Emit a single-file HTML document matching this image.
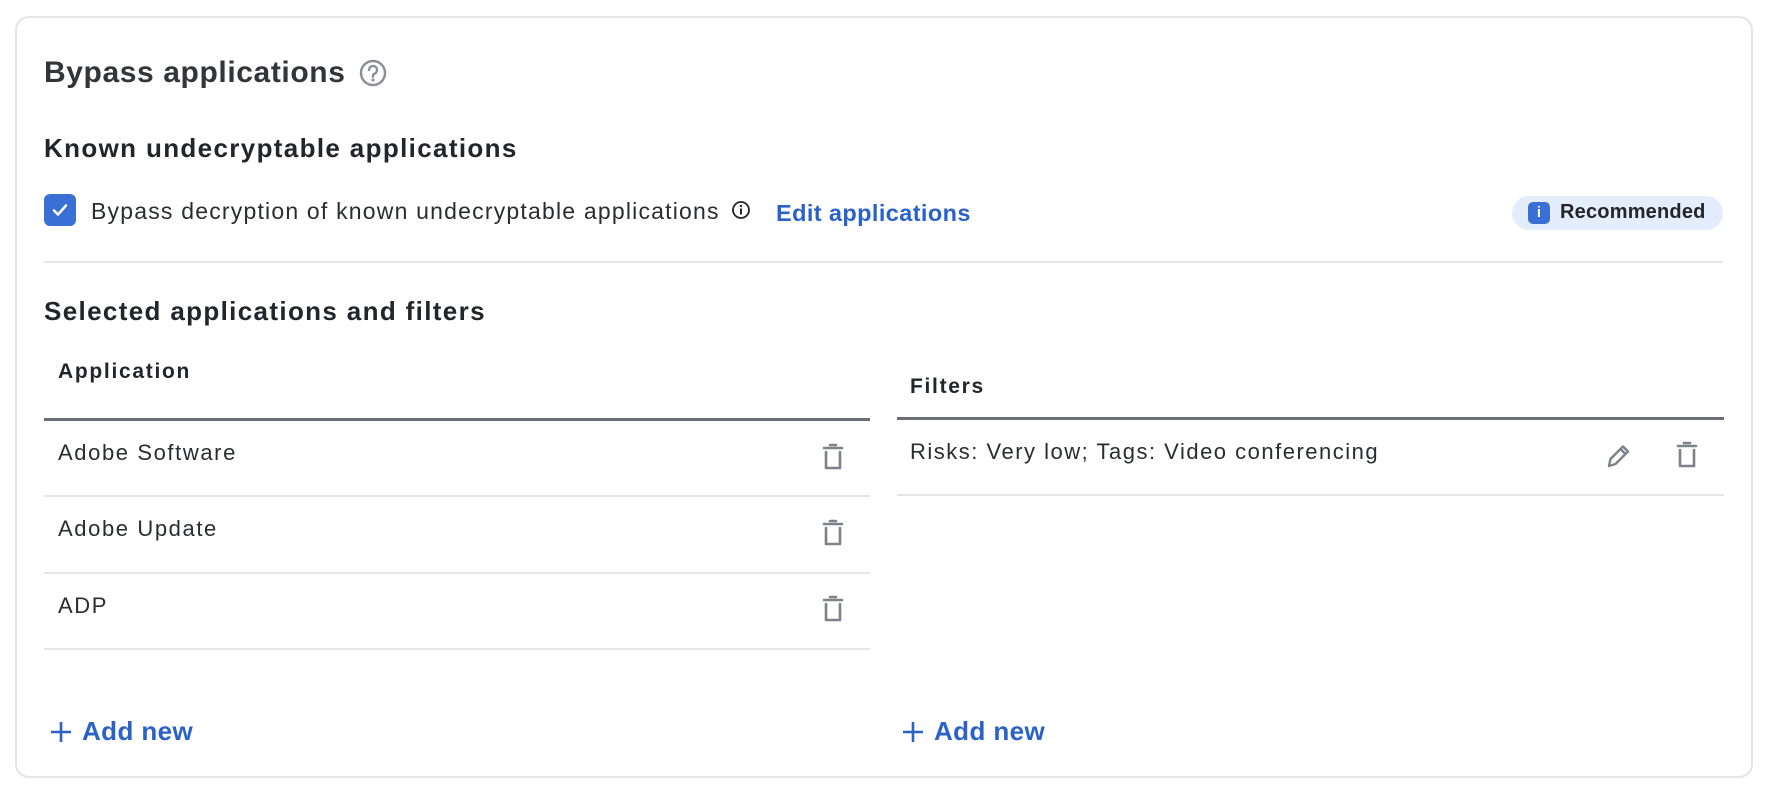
<!DOCTYPE html>
<html><head><meta charset="utf-8"><style>
*{box-sizing:border-box;margin:0;padding:0}
body{width:1766px;height:794px;background:#fff;font-family:"Liberation Sans",sans-serif;color:#23252b;position:relative;overflow:hidden}
.card{position:absolute;left:15px;top:16px;width:1738px;height:762px;border:2px solid #e3e5e8;border-radius:14px}
.a{position:absolute;white-space:nowrap}
.h1{font-size:30px;font-weight:bold;color:#33353b;letter-spacing:0.6px}
.h2{font-size:26px;font-weight:bold;letter-spacing:1.35px}
.t{font-size:22px;color:#2a2c31;letter-spacing:1.6px}
.th{font-size:21px;font-weight:bold;letter-spacing:1.7px}
.blue{color:#2a62c7;font-weight:bold;font-size:23.5px;letter-spacing:0.4px}
.line{position:absolute;height:2px;background:#e3e5e8}
.dline{position:absolute;height:3px;background:#6a6f77}
</style></head><body>
<div class="card"></div>
<div class="a h1" style="left:44px;top:56px">Bypass applications</div>
<svg class="a" style="left:359px;top:59px" width="28" height="28" viewBox="0 0 28 28"><circle cx="14" cy="14" r="12" fill="none" stroke="#8a8e96" stroke-width="2.4"/><path d="M10 11a4 4 0 1 1 5.5 3.7c-1 .4-1.5 1-1.5 2v1" fill="none" stroke="#8a8e96" stroke-width="2.4" stroke-linecap="round"/><circle cx="14" cy="21" r="1.5" fill="#8a8e96"/></svg>
<div class="a h2" style="left:44px;top:133px">Known undecryptable applications</div>
<div class="a" style="left:44px;top:194px;width:32px;height:32px;background:#3a6fd6;border-radius:6px"></div>
<svg class="a" style="left:44px;top:194px" width="32" height="32"><path d="M10 16.5l4 4 8-9" fill="none" stroke="#fff" stroke-width="2.5" stroke-linecap="round" stroke-linejoin="round"/></svg>
<div class="a t" style="left:91px;top:198px;font-size:23px;letter-spacing:1.2px">Bypass decryption of known undecryptable applications</div>
<svg class="a" style="left:731px;top:200px" width="20" height="20"><circle cx="10" cy="10" r="8" fill="none" stroke="#23252b" stroke-width="1.8"/><rect x="9" y="8.5" width="2" height="6" fill="#23252b"/><circle cx="10" cy="6" r="1.2" fill="#23252b"/></svg>
<div class="a blue" style="left:776px;top:200px">Edit applications</div>
<div class="a" style="left:1512px;top:196px;width:211px;height:34px;background:#e4edfc;border-radius:17px"></div>
<div class="a" style="left:1528px;top:202px;width:22px;height:22px;background:#3a6fd6;border-radius:5px;color:#fff;font-size:15px;font-weight:bold;text-align:center;line-height:22px">i</div>
<div class="a" style="left:1560px;top:201px;font-size:20px;font-weight:bold;color:#23252b;letter-spacing:0.2px">Recommended</div>
<div class="line" style="left:44px;top:261px;width:1679px"></div>
<div class="a h2" style="left:44px;top:296px">Selected applications and filters</div>
<div class="a th" style="left:58px;top:360px">Application</div>
<div class="a th" style="left:910px;top:375px">Filters</div>
<div class="dline" style="left:44px;top:418px;width:826px"></div>
<div class="dline" style="left:897px;top:417px;width:827px"></div>
<div class="a t" style="left:58px;top:440px">Adobe Software</div>
<div class="a t" style="left:58px;top:516px">Adobe Update</div>
<div class="a t" style="left:58px;top:593px">ADP</div>
<div class="line" style="left:44px;top:495px;width:826px"></div>
<div class="line" style="left:44px;top:572px;width:826px"></div>
<div class="line" style="left:44px;top:648px;width:826px"></div>
<div class="a t" style="left:910px;top:439px;letter-spacing:1.5px">Risks: Very low; Tags: Video conferencing</div>
<div class="line" style="left:897px;top:494px;width:827px"></div>
<svg width="0" height="0" style="position:absolute"><defs><g id="tr"><path d="M4 5h18M10 2h6M6 9v16h14V9" fill="none" stroke="#7d8189" stroke-width="2.6" stroke-linecap="round" stroke-linejoin="round"/></g></defs></svg>
<svg class="a" style="left:820px;top:443px" width="26" height="28"><use href="#tr"/></svg>
<svg class="a" style="left:820px;top:519px" width="26" height="28"><use href="#tr"/></svg>
<svg class="a" style="left:820px;top:595px" width="26" height="28"><use href="#tr"/></svg>
<svg class="a" style="left:1674px;top:441px" width="26" height="28"><use href="#tr"/></svg>
<svg class="a" style="left:1604px;top:441px" width="28" height="30"><path d="M5 25l1.5-7L19 5.5l5 5L11.5 23z M16.5 8l5 5" fill="none" stroke="#7d8189" stroke-width="2.4" stroke-linejoin="round"/></svg>
<svg class="a" style="left:50px;top:721px" width="22" height="22"><path d="M11 1v20M1 11h20" stroke="#2a62c7" stroke-width="2.6"/></svg>
<div class="a blue" style="left:82px;top:716px;font-size:26px">Add new</div>
<svg class="a" style="left:902px;top:721px" width="22" height="22"><path d="M11 1v20M1 11h20" stroke="#2a62c7" stroke-width="2.6"/></svg>
<div class="a blue" style="left:934px;top:716px;font-size:26px">Add new</div>
</body></html>
